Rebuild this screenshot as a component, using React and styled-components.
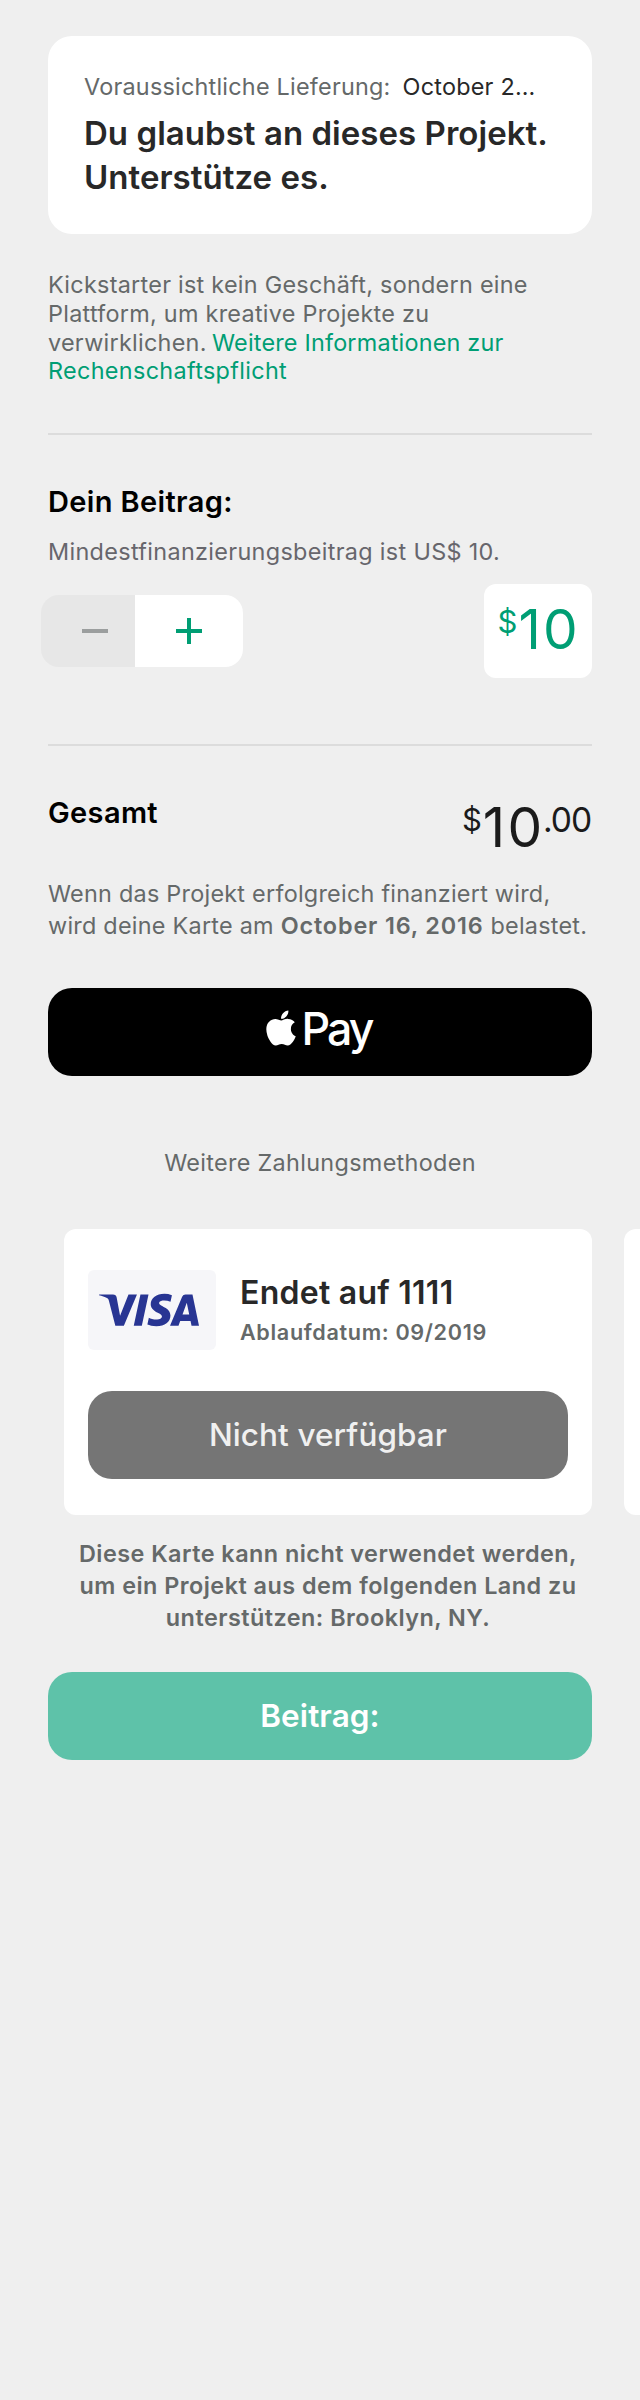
import React from "react";
import styled, { createGlobalStyle } from "styled-components";
import { FaApple } from "react-icons/fa";
import { SiVisa } from "react-icons/si";

const GlobalStyle = createGlobalStyle`
  body {
    margin: 0;
    background: #efefef;
    font-family: Inter, "Liberation Sans", sans-serif;
  }
  *, *::before, *::after { box-sizing: border-box; }
`;

const Page = styled.main`
  width: 640px;
  height: 2400px;
  padding: 36px 48px 0;
  overflow: hidden;
  background: #efefef;
`;

const RewardCard = styled.section`
  height: 198px;
  padding: 36px 24px 0 36px;
  border-radius: 24px;
  background: #fff;
`;

const Delivery = styled.div`
  display: flex;
  gap: 12px;
  font-size: 23.4px;
  line-height: 30px;
  letter-spacing: 0.23px;
  white-space: nowrap;
  color: #656969;
`;

const DeliveryDate = styled.span`
  color: #282828;
`;

const RewardTitle = styled.h1`
  margin: 9px 0 0;
  font-size: 33px;
  font-weight: 600;
  line-height: 44px;
  letter-spacing: 0.04px;
  white-space: nowrap;
  color: #282828;
`;

const Disclaimer = styled.p`
  margin: 37px 0 47px;
  font-size: 23.4px;
  line-height: 28.75px;
  letter-spacing: 0.27px;
  white-space: nowrap;
  color: #656969;
`;

const InfoLink = styled.a`
  margin-left: -1.5px;
  letter-spacing: ${(p) => (p.$tight ? "0.2px" : "0.33px")};
  color: #009e74;
`;

const InfoLinkEnd = styled(InfoLink)`
  margin-left: 0;
`;

const Divider = styled.hr`
  height: 2px;
  margin: 0;
  border: 0;
  background: #dcdcdc;
`;

const SectionTitle = styled.h2`
  margin: ${(p) => p.$top}px 0 0;
  font-size: 29px;
  font-weight: 600;
  line-height: 36px;
  letter-spacing: 0.36px;
  color: #000;
`;

const MinimumText = styled.p`
  margin: 17px 0;
  font-size: 23.4px;
  line-height: 30px;
  letter-spacing: 0.33px;
  color: #67666c;
`;

const PledgeRow = styled.div`
  display: flex;
  align-items: center;
  justify-content: space-between;
  margin: 0 0 66px -7px;
`;

const Stepper = styled.div`
  display: flex;
  height: 72px;
  border-radius: 18px;
  overflow: hidden;
`;

const StepButton = styled.button`
  display: flex;
  align-items: center;
  justify-content: center;
  width: 108px;
  height: 72px;
  margin: 0;
  padding: 0;
  border: 0;
  color: ${(p) => (p.$inactive ? "#9b9e9e" : "#009e74")};
  background: ${(p) => (p.$inactive ? "#e7e7e7" : "#fff")};

  & + & {
    margin-left: -14px;
  }
`;

const AmountBox = styled.div`
  width: 108px;
  height: 94px;
  padding: 12px 0 0 13.5px;
  border-radius: 12px;
  background: #fff;
`;

const Amount = styled.div`
  display: flex;
  align-items: flex-start;
  height: 66px;
  white-space: nowrap;
  color: ${(p) => p.$color};
`;

const Currency = styled.span`
  margin: 8px 1px 0 0;
  font-size: 31px;
  line-height: 36px;
`;

const Whole = styled.span`
  font-size: 55px;
  line-height: 66px;
  letter-spacing: 2.2px;
`;

const Cents = styled.span`
  margin: 5px 1px 0 -1.2px;
  font-size: 33.6px;
  line-height: 41px;
  letter-spacing: -1.1px;
`;

const TotalRow = styled.div`
  display: flex;
  justify-content: space-between;
  align-items: flex-start;
  margin-top: 48px;
`;

const ChargeNote = styled.p`
  margin: 18px 0 46px;
  font-size: 23.4px;
  line-height: 32px;
  letter-spacing: 0.25px;
  white-space: nowrap;
  color: #656969;

  strong {
    font-weight: 600;
    letter-spacing: 0.85px;
  }
`;

const Button = styled.button`
  display: flex;
  align-items: center;
  justify-content: center;
  width: 100%;
  height: 88px;
  margin: 0;
  padding: 0 0 2px;
  border: 0;
  border-radius: 24px;
  font-family: inherit;
  font-size: 31.5px;
  font-weight: ${(p) => p.$weight || 500};
  letter-spacing: 0.08px;
  color: ${(p) => p.$fg};
  background: ${(p) => p.$bg};
`;

const PayMark = styled.span`
  display: flex;
  align-items: flex-start;
  height: 58px;
  margin-right: 2px;

  svg {
    display: block;
    width: 30px;
    height: 40px;
    margin-top: 6px;
  }
`;

const PayWord = styled.span`
  margin-left: 5px;
  font-size: 44.7px;
  line-height: 54px;
  letter-spacing: -2.9px;
`;

const OtherMethods = styled.p`
  margin: 72px 0 51px;
  font-size: 23.4px;
  line-height: 30px;
  letter-spacing: 0.32px;
  text-align: center;
  color: #656969;
`;

const CardScroller = styled.div`
  display: flex;
  gap: 32px;
  width: 576px;
  margin-left: 16px;
  overflow: hidden;
`;

const PaymentCard = styled.article`
  flex: none;
  width: 528px;
  height: 286px;
  padding: 41px 24px 0;
  border-radius: 12px;
  background: #fff;
`;

const CardHeader = styled.div`
  display: flex;
  gap: 24px;
  margin-bottom: 41px;
`;

const CardLogo = styled.div`
  display: flex;
  align-items: center;
  width: 128px;
  height: 80px;
  padding-left: 11px;
  border-radius: 6px;
  color: #283593;
  background: #f6f6f9;
`;

const CardText = styled.div`
  padding-top: 3px;
`;

const CardName = styled.div`
  font-size: 32px;
  font-weight: 600;
  line-height: 40px;
  letter-spacing: 0.26px;
  color: #282828;
`;

const CardExpiry = styled.div`
  margin-top: 6px;
  font-size: 21.6px;
  font-weight: 600;
  line-height: 26px;
  letter-spacing: 0.66px;
  color: #656969;
`;

const CardNotice = styled.p`
  margin: 23px 0 38px 16px;
  font-size: 23.4px;
  font-weight: 600;
  line-height: 32px;
  letter-spacing: 0.47px;
  text-align: center;
  white-space: nowrap;
  color: #656969;
`;

const StepIcon = ({ plus }) => (
  <svg width="26" height="26" viewBox="0 0 26 26" stroke="currentColor" strokeWidth="4">
    <path d={plus ? "M0 13H26M13 0V26" : "M0 13H26"} />
  </svg>
);

export default function App() {
  return (
    <>
      <GlobalStyle />
      <Page>
        <RewardCard>
          <Delivery>
            <span>Voraussichtliche Lieferung:</span>
            <DeliveryDate>October 2…</DeliveryDate>
          </Delivery>
          <RewardTitle>
            Du glaubst an dieses Projekt.
            <br />
            Unterstütze es.
          </RewardTitle>
        </RewardCard>

        <Disclaimer>
          Kickstarter ist kein Geschäft, sondern eine
          <br />
          Plattform, um kreative Projekte zu
          <br />
          verwirklichen. <InfoLink $tight>Weitere Informationen zur</InfoLink>
          <br />
          <InfoLinkEnd>Rechenschaftspflicht</InfoLinkEnd>
        </Disclaimer>
        <Divider />

        <SectionTitle $top={49}>Dein Beitrag:</SectionTitle>
        <MinimumText>Mindestfinanzierungsbeitrag ist US$ 10.</MinimumText>
        <PledgeRow>
          <Stepper>
            <StepButton $inactive aria-label="Verringern">
              <StepIcon />
            </StepButton>
            <StepButton aria-label="Erhöhen">
              <StepIcon plus />
            </StepButton>
          </Stepper>
          <AmountBox>
            <Amount $color="#009e74">
              <Currency>$</Currency>
              <Whole>10</Whole>
            </Amount>
          </AmountBox>
        </PledgeRow>
        <Divider />

        <TotalRow>
          <SectionTitle $top={1}>Gesamt</SectionTitle>
          <Amount $color="#1b1b1b">
            <Currency>$</Currency>
            <Whole>10</Whole>
            <Cents>.00</Cents>
          </Amount>
        </TotalRow>
        <ChargeNote>
          Wenn das Projekt erfolgreich finanziert wird,
          <br />
          wird deine Karte am <strong>October 16, 2016</strong> belastet.
        </ChargeNote>

        <Button $fg="#fff" $bg="#000">
          <PayMark>
            <FaApple />
            <PayWord>Pay</PayWord>
          </PayMark>
        </Button>
        <OtherMethods>Weitere Zahlungsmethoden</OtherMethods>

        <CardScroller>
          <PaymentCard>
            <CardHeader>
              <CardLogo>
                <SiVisa size={100} />
              </CardLogo>
              <CardText>
                <CardName>Endet auf 1111</CardName>
                <CardExpiry>Ablaufdatum: 09/2019</CardExpiry>
              </CardText>
            </CardHeader>
            <Button $fg="#f0f0f0" $bg="#757575">
              Nicht verfügbar
            </Button>
          </PaymentCard>
          <PaymentCard />
        </CardScroller>
        <CardNotice>
          Diese Karte kann nicht verwendet werden,
          <br />
          um ein Projekt aus dem folgenden Land zu
          <br />
          unterstützen: Brooklyn, NY.
        </CardNotice>

        <Button $fg="#fff" $bg="#5ec2a9" $weight={600}>
          Beitrag:
        </Button>
      </Page>
    </>
  );
}
